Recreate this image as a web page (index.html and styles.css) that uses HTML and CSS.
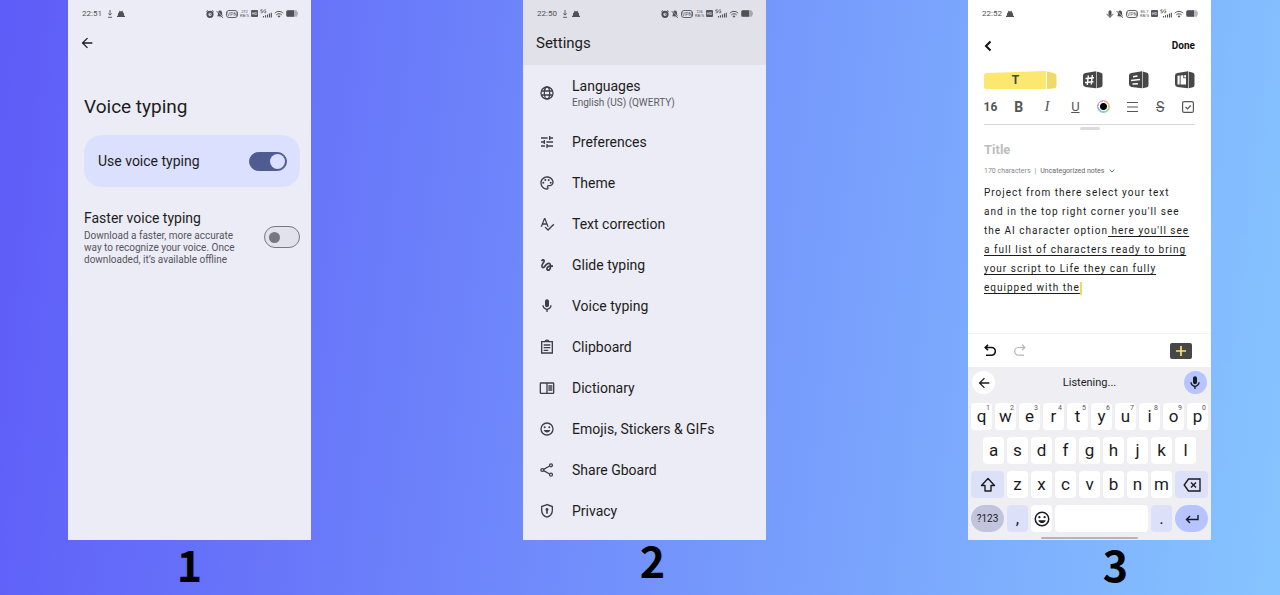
FILE: index.html
```
<!DOCTYPE html>
<html lang="en">
<head>
  <meta charset="UTF-8">
  <meta name="viewport" content="width=device-width, initial-scale=1.0">
  <title>Gboard voice typing steps</title>
  <link rel="stylesheet" href="styles.css">
</head>
<body>

  <!-- Icon set -->
  <svg class="sprite" aria-hidden="true">
    <symbol id="i-download" viewBox="0 0 8 8"><path d="M4 0v5M2.3 3.4 4 5.2l1.7-1.8M2 7.3h4" fill="none" stroke="currentColor" stroke-width=".9"/></symbol>
    <symbol id="i-bug" viewBox="0 0 8 8"><path d="M2.3.4 3 1.200h2l.7-.8.2 1.800 1.100 1.300v2.300H8v1.200H0V5.800h1V3.500l1.100-1.300z" fill="currentColor"/></symbol>
    <symbol id="i-alarm" viewBox="0 0 8 8"><path d="M.3 1.800 2 .4M7.700 1.800 6 .4" stroke="currentColor"/><circle cx="4" cy="4.300" r="2.600" fill="none" stroke="currentColor" stroke-width="2"/><path d="M4 3v1.500h1" fill="none" stroke="currentColor" stroke-width=".6"/></symbol>
    <symbol id="i-mute" viewBox="0 0 8 8"><path d="M4 .5c1.600.3 2.100 1.300 2.100 2.700V5l.9 1.200H1L1.900 5V3.200C1.900 1.800 2.400.800 4 .5zM3.200 6.700h1.600L4 7.600z" fill="currentColor"/><path d="M1 .6 7.300 7.500" stroke="#ececf6" stroke-width=".8"/><path d="M.6 1 6.900 7.900" stroke="currentColor" stroke-width=".9"/></symbol>
    <symbol id="i-signal" viewBox="0 0 12 9"><path d="M3.500 7v1.500M5.500 6.200v2.300M7.500 5.400v3.100M9.500 4.600v3.900M11.300 3.700v4.800" stroke="currentColor" stroke-width="1.100"/><path d="M2.600.8H.8v1.300h1.100c1.200 0 1.200 1.700 0 1.700H.6M6 1.200C4.800.2 3.700 1 3.700 2.300S5 4.300 6 3.400v-.9H5" fill="none" stroke="currentColor" stroke-width=".7"/></symbol>
    <symbol id="i-wifi" viewBox="0 0 10 8"><path d="M.8 3.200c2.400-2.400 6-2.400 8.400 0M2.300 4.900c1.600-1.500 3.800-1.500 5.400 0" fill="none" stroke="currentColor"/><path d="m5 7.700-1.500-1.700c.9-.8 2.100-.8 3 0z" fill="currentColor"/></symbol>
    <symbol id="i-battery" viewBox="0 0 12 8"><rect x=".3" y=".8" width="11" height="6.400" rx="1.500" fill="currentColor" opacity=".4"/><path d="M1.800.8H8v6.400H1.800A1.500 1.500 0 0 1 .3 5.700V2.300A1.500 1.500 0 0 1 1.800.8z" fill="currentColor"/><path d="M11.800 3v2" stroke="currentColor" stroke-width=".5"/></symbol>
    <symbol id="i-back" viewBox="0 0 24 24"><path d="M20 11H7.830l5.590-5.590L12 4l-8 8 8 8 1.410-1.410L7.830 13H20z" fill="currentColor"/></symbol>
    <symbol id="i-globe" viewBox="0 0 24 24"><g fill="none" stroke="currentColor" stroke-width="1.900"><circle cx="12" cy="12" r="9"/><ellipse cx="12" cy="12" rx="4" ry="9"/><path d="M3.800 9h16.400M3.800 15h16.400"/></g></symbol>
    <symbol id="i-tune" viewBox="0 0 24 24"><path d="M3 17v2h6v-2H3zM3 5v2h10V5H3zm10 16v-2h8v-2h-8v-2h-2v6h2zM7 9v2H3v2h4v2h2V9H7zm14 4v-2H11v2h10zm-6-4h2V7h4V5h-4V3h-2v6z" fill="currentColor"/></symbol>
    <symbol id="i-palette" viewBox="0 0 24 24"><g fill="currentColor"><path d="M12 22C6.490 22 2 17.510 2 12S6.490 2 12 2s10 4.040 10 9c0 3.310-2.690 6-6 6h-1.770c-.28 0-.5.22-.5.5 0 .12.05.23.13.33.41.47.64 1.060.64 1.670A2.500 2.500 0 0 1 12 22zm0-18c-4.410 0-8 3.590-8 8s3.590 8 8 8c.28 0 .5-.22.5-.5a.54.54 0 0 0-.14-.35c-.41-.46-.63-1.050-.63-1.650a2.500 2.500 0 0 1 2.500-2.500H16c2.210 0 4-1.790 4-4 0-3.860-3.590-7-8-7z"/><circle cx="6.500" cy="11.500" r="1.500"/><circle cx="9.500" cy="7.500" r="1.500"/><circle cx="14.500" cy="7.500" r="1.500"/><circle cx="17.500" cy="11.500" r="1.500"/></g></symbol>
    <symbol id="i-spell" viewBox="0 0 24 24"><path d="M12.450 16h2.090L9.430 3H7.570L2.460 16h2.090l1.120-3h5.640l1.140 3zm-6.020-5L8.500 5.480 10.570 11H6.430zm15.160.59l-8.090 8.090L9.830 16l-1.410 1.410 5.090 5.090L23 13l-1.410-1.410z" fill="currentColor"/></symbol>
    <symbol id="i-gesture" viewBox="0 0 24 24"><path d="M4.590 6.890c.7-.71 1.400-1.350 1.710-1.220.5.2 0 1.030-.3 1.520-.25.42-2.860 3.890-2.860 6.310 0 1.280.48 2.340 1.340 2.980.75.56 1.740.73 2.640.46 1.070-.31 1.950-1.400 3.060-2.770 1.210-1.490 2.830-3.440 4.080-3.440 1.630 0 1.650 1.010 1.760 1.790-3.780.64-5.380 3.670-5.380 5.370 0 1.700 1.440 3.090 3.210 3.090 1.630 0 4.290-1.330 4.690-6.100H21v-2.500h-2.470c-.15-1.650-1.090-4.200-4.030-4.200-2.250 0-4.180 1.910-4.940 2.840-.58.73-2.060 2.480-2.290 2.720-.25.3-.68.84-1.110.84-.45 0-.72-.83-.36-1.920.35-1.090 1.400-2.860 1.850-3.520.78-1.140 1.300-1.920 1.300-3.280C8.950 3.690 7.310 3 6.440 3 5.120 3 3.970 4 3.720 4.250c-.36.36-.66.66-.88.93l1.750 1.710zm9.290 11.660c-.31 0-.74-.26-.74-.72 0-.6.73-2.200 2.870-2.760-.3 2.690-1.430 3.480-2.130 3.480z" fill="currentColor"/></symbol>
    <symbol id="i-mic" viewBox="0 0 24 24"><path d="M12 14c1.660 0 3-1.340 3-3V5c0-1.660-1.340-3-3-3S9 3.340 9 5v6c0 1.660 1.340 3 3 3zM17 11c0 2.760-2.240 5-5 5s-5-2.240-5-5H5c0 3.530 2.610 6.430 6 6.920V21h2v-3.080c3.390-.49 6-3.390 6-6.920h-2z" fill="currentColor"/></symbol>
    <symbol id="i-mic-small" viewBox="0 0 8 8"><path d="M2.500 1.800a1.500 1.500 0 0 1 3 0v2.400a1.500 1.500 0 0 1-3 0z" fill="currentColor"/><path d="M1 3.800c.2 3.200 5.800 3.200 6 0M4 6v2" fill="none" stroke="currentColor"/></symbol>
    <symbol id="i-clipboard" viewBox="0 0 24 24"><g fill="none" stroke="currentColor" stroke-width="2"><path d="M9 4H4v17h16V4h-5M7 9h10M7 13h10M7 17h7"/><path d="M9 4c.5-3 5.500-3 6 0z"/></g></symbol>
    <symbol id="i-book" viewBox="0 0 24 24"><g fill="none" stroke="currentColor" stroke-width="2"><rect x="2" y="4.500" width="20" height="15.500" rx="1"/><path d="M12 4.500V20M14 9h6M14 12h6M14 15h6"/></g></symbol>
    <symbol id="i-smile" viewBox="0 0 24 24"><circle cx="12" cy="12" r="9" fill="none" stroke="currentColor" stroke-width="2"/><g fill="currentColor"><circle cx="8.500" cy="9.500" r="1.500"/><circle cx="15.500" cy="9.500" r="1.500"/><path d="M7 13.500h10c-1.600 5-8.400 5-10 0z"/></g></symbol>
    <symbol id="i-share" viewBox="0 0 24 24"><g fill="none" stroke="currentColor" stroke-width="1.900"><circle cx="18" cy="5" r="2.200"/><circle cx="5" cy="12" r="2.200"/><circle cx="18" cy="19" r="2.200"/><path d="m7 11 9-5M7 13l9 5"/></g></symbol>
    <symbol id="i-shield" viewBox="0 0 24 24"><path d="M12 2.300 4 5.300V11c0 5 3.300 8.900 8 10.300 4.700-1.400 8-5.300 8-10.300V5.300z" fill="none" stroke="currentColor" stroke-width="2"/><path d="M12 7.500a2.300 2.300 0 0 1 1.200 4.200V16h-2.400v-4.300A2.300 2.300 0 0 1 12 7.500z" fill="currentColor"/></symbol>
  </svg>

  <main class="steps">

    <!-- Step 1 -->
    <section class="step">
      <div class="phone">
        <div class="status">
          <span class="time">22:51</span>
          <svg class="s8"><use href="#i-download"/></svg>
          <svg class="s8"><use href="#i-bug"/></svg>
          <div class="status-right">
            <svg class="s8"><use href="#i-alarm"/></svg>
            <svg class="s8"><use href="#i-mute"/></svg>
            <span class="vpn">VPN</span>
            <span class="speed">272<br>KB/S</span>
            <span class="hd">HD</span>
            <svg class="s12"><use href="#i-signal"/></svg>
            <svg class="s10"><use href="#i-wifi"/></svg>
            <svg class="s12"><use href="#i-battery"/></svg>
          </div>
        </div>
        <button class="back" aria-label="Back"><svg><use href="#i-back"/></svg></button>
        <div class="voice">
          <h1>Voice typing</h1>
          <label class="card">
            <span>Use voice typing</span>
            <input type="checkbox" class="switch" checked>
          </label>
          <label class="option">
            <span class="option-text">
              <span>Faster voice typing</span>
              <small>Download a faster, more accurate way to recognize your voice. Once downloaded, it’s available offline</small>
            </span>
            <input type="checkbox" class="switch">
          </label>
        </div>
      </div>
      <p class="number">1</p>
    </section>

    <!-- Step 2 -->
    <section class="step step-two">
      <div class="phone">
        <header class="settings-head">
          <div class="status">
            <span class="time">22:50</span>
            <svg class="s8"><use href="#i-download"/></svg>
            <svg class="s8"><use href="#i-bug"/></svg>
            <div class="status-right">
              <svg class="s8"><use href="#i-alarm"/></svg>
              <svg class="s8"><use href="#i-mute"/></svg>
              <span class="vpn">VPN</span>
              <span class="speed">126<br>KB/S</span>
              <span class="hd">HD</span>
              <svg class="s12"><use href="#i-signal"/></svg>
              <svg class="s10"><use href="#i-wifi"/></svg>
              <svg class="s12"><use href="#i-battery"/></svg>
            </div>
          </div>
          <h2>Settings</h2>
        </header>
        <ul class="menu">
          <li class="tall"><svg><use href="#i-globe"/></svg><span>Languages<small>English (US) (QWERTY)</small></span></li>
          <li><svg><use href="#i-tune"/></svg><span>Preferences</span></li>
          <li><svg><use href="#i-palette"/></svg><span>Theme</span></li>
          <li><svg><use href="#i-spell"/></svg><span>Text correction</span></li>
          <li><svg><use href="#i-gesture"/></svg><span>Glide typing</span></li>
          <li><svg><use href="#i-mic"/></svg><span>Voice typing</span></li>
          <li><svg><use href="#i-clipboard"/></svg><span>Clipboard</span></li>
          <li><svg><use href="#i-book"/></svg><span>Dictionary</span></li>
          <li><svg><use href="#i-smile"/></svg><span>Emojis, Stickers &amp; GIFs</span></li>
          <li><svg><use href="#i-share"/></svg><span>Share Gboard</span></li>
          <li><svg><use href="#i-shield"/></svg><span>Privacy</span></li>
        </ul>
      </div>
      <p class="number">2</p>
    </section>

    <!-- Step 3 -->
    <section class="step step-three">
      <div class="phone note">
        <div class="status">
          <span class="time">22:52</span>
          <svg class="s8"><use href="#i-bug"/></svg>
          <div class="status-right">
            <svg class="s8"><use href="#i-mic-small"/></svg>
            <svg class="s8"><use href="#i-mute"/></svg>
            <span class="vpn">VPN</span>
            <span class="speed">85.7<br>KB/S</span>
            <span class="hd">HD</span>
            <svg class="s12"><use href="#i-signal"/></svg>
            <svg class="s10"><use href="#i-wifi"/></svg>
            <svg class="s12"><use href="#i-battery"/></svg>
          </div>
        </div>

        <div class="note-head">
          <button aria-label="Back"><svg width="8" height="12" viewBox="0 0 8 12"><path d="M6.500 1.500 2 6l4.500 4.500" fill="none" stroke="#111" stroke-width="2"/></svg></button>
          <button class="done">Done</button>
        </div>

        <div class="tabs">
          <button class="tab-text" aria-label="Text">
            <svg width="73" height="18" viewBox="0 0 73 18">
              <path d="M2.500 2 62 0v18H2.500Q0 18 0 15.500V4.500Q0 2 2.500 2z" fill="#fce771"/>
              <path d="m63 .2 7.500 2.100q2 .7 2 2.700v10q0 2-2 2.300L63 18z" fill="#f0d966"/>
            </svg>
            <span>T</span>
          </button>
          <button aria-label="Tag">
            <svg width="20" height="18" viewBox="0 0 20 18">
              <path d="M2.500 2 13 .3v17L2.500 16Q0 15.700 0 13V4.500Q0 2.300 2.500 2zM13.600.4 18 1.800q1.500.6 1.500 2.200v10q0 1.800-1.500 2.300l-4.400 1z" fill="#474747"/>
              <path d="M5.300 4.500 4.300 14M9.300 4l-1 9.500M2.500 7.500l8.500-.8M2 11.500l8.500-.8" stroke="#fff" stroke-width="1.400"/>
            </svg>
          </button>
          <button aria-label="Layout">
            <svg width="20" height="18" viewBox="0 0 20 18">
              <path d="M2.500 2 13 .3v17L2.500 16Q0 15.700 0 13V4.500Q0 2.300 2.500 2zM13.600.4 18 1.800q1.500.6 1.500 2.200v10q0 1.800-1.500 2.300l-4.400 1z" fill="#474747"/>
              <path d="M4 5.700 8.500 5M2 9.500l9-1M3.500 13l5.500-.3" stroke="#fff" stroke-width="1.400"/>
            </svg>
          </button>
          <button aria-label="Template">
            <svg width="20" height="18" viewBox="0 0 20 18">
              <path d="M2.500 2 13 .3v17L2.500 16Q0 15.700 0 13V4.500Q0 2.300 2.500 2zM13.600.4 18 1.800q1.500.6 1.500 2.200v10q0 1.800-1.500 2.300l-4.400 1z" fill="#474747"/>
              <path d="M2.500 4.800v8.700h2.200V4.600zM5.600 4.500v9H11V7.300H8.300v-3zM9.200 4.200v2.200H11V4z" fill="#fff"/>
            </svg>
          </button>
        </div>

        <div class="format">
          <button class="size">16</button>
          <button class="bold">B</button>
          <button class="italic">I</button>
          <button class="under">U</button>
          <button class="color" aria-label="Text color"></button>
          <button aria-label="Align"><svg width="12" height="12" viewBox="0 0 12 12"><path d="M1 1.500h11M1 6h11M1 10.500h11" stroke="#555" stroke-width="1.200"/></svg></button>
          <button class="strike">S</button>
          <button aria-label="Checklist"><svg width="12" height="12" viewBox="0 0 12 12"><rect x=".6" y=".6" width="10.800" height="10.800" rx="1.500" fill="none" stroke="#555" stroke-width="1.200"/><path d="m3.500 6 2 2 3.200-3.500" fill="none" stroke="#555" stroke-width="1.200"/></svg></button>
        </div>
        <div class="grip"></div>

        <div class="page">
          <input type="text" class="title" placeholder="Title" aria-label="Title">
          <div class="meta">
            <span>170 characters</span>
            <span>|</span>
            <select aria-label="Category"><option>Uncategorized notes</option></select>
            <svg width="6" height="4" viewBox="0 0 6 4"><path d="m.5.5 2.500 2.500L5.500.5" fill="none" stroke="#666" stroke-width=".9"/></svg>
          </div>
          <p class="body-text">Project from there select your text<br>and in the top right corner you'll see<br>the AI character option<u> here you'll see<br>a full list of characters ready to bring<br>your script to Life they can fully<br>equipped with the</u><span class="caret"></span></p>
        </div>

        <div class="undo-bar">
          <button aria-label="Undo"><svg width="12" height="13" viewBox="0 0 12 13"><path d="M4 .8 1.200 3.500 4 6.300M1.500 3.500h6a3.700 3.700 0 0 1 0 7.700H2" fill="none" stroke="#111" stroke-width="1.600"/></svg></button>
          <button aria-label="Redo"><svg width="12" height="13" viewBox="0 0 12 13"><path d="m8 .8 2.800 2.700L8 6.300M10.500 3.500h-6a3.700 3.700 0 0 0 0 7.700H10" fill="none" stroke="#b5b5b5" stroke-width="1.200"/></svg></button>
          <button class="add" aria-label="Add"><svg width="22" height="16" viewBox="0 0 22 16"><rect width="22" height="16" rx="2" fill="#474747"/><path d="M11 3v10M6 8h10" stroke="#fbe36a" stroke-width="1.700"/></svg></button>
        </div>

        <div class="keyboard">
          <div class="voice-bar">
            <button class="round" aria-label="Back"><svg><use href="#i-back"/></svg></button>
            <span>Listening...</span>
            <button class="round on" aria-label="Microphone"><svg><use href="#i-mic"/></svg></button>
          </div>
          <div class="keys">
            <button>q<sup>1</sup></button><button>w<sup>2</sup></button><button>e<sup>3</sup></button><button>r<sup>4</sup></button><button>t<sup>5</sup></button><button>y<sup>6</sup></button><button>u<sup>7</sup></button><button>i<sup>8</sup></button><button>o<sup>9</sup></button><button>p<sup>0</sup></button>
            <button class="indent">a</button><button>s</button><button>d</button><button>f</button><button>g</button><button>h</button><button>j</button><button>k</button><button>l</button>
            <button class="wide soft shift" aria-label="Shift"><svg width="16" height="16" viewBox="0 0 16 16"><path d="M8 1.500 1.500 8.500H5V14h6V8.500h3.500z" fill="none" stroke="currentColor" stroke-width="1.400" stroke-linejoin="round"/></svg></button><button>z</button><button>x</button><button>c</button><button>v</button><button>b</button><button>n</button><button>m</button><button class="wide soft" aria-label="Delete"><svg width="18" height="14" viewBox="0 0 18 14"><path d="M5.500 1H17v12H5.500L1.200 7zM8 4.500l5 5M13 4.500l-5 5" fill="none" stroke="currentColor" stroke-width="1.400"/></svg></button>
            <button class="wide pill sym">?123</button><button class="soft">,</button><button aria-label="Emoji"><svg width="18" height="18"><use href="#i-smile"/></svg></button><button class="space" aria-label="Space"></button><button class="soft">.</button><button class="wide pill enter" aria-label="Enter"><svg width="14" height="10" viewBox="0 0 14 10"><path d="M13 1v4.500H1.500M5 2 1.500 5.500 5 9" fill="none" stroke="currentColor" stroke-width="1.400"/></svg></button>
          </div>
          <div class="home"></div>
        </div>
      </div>
      <p class="number">3</p>
    </section>

  </main>
</body>
</html>
```
FILE: styles.css
```
* {
  box-sizing: border-box;
}

body {
  margin: 0;
  min-height: 100vh;
  background: linear-gradient(97deg, #5e5cf8, #86c4ff);
  font-family: Roboto, "Liberation Sans", sans-serif;
  color: #1c1c20;
}

h1, h2, p, ul {
  margin: 0;
  padding: 0;
}

button {
  padding: 0;
  border: 0;
  background: none;
  font: inherit;
  color: inherit;
  display: flex;
  align-items: center;
  justify-content: center;
}

svg {
  display: block;
  flex: none;
}

.sprite {
  position: absolute;
  width: 0;
  height: 0;
}

/* three phones on the gradient */
.steps {
  display: grid;
  grid-template-columns: 455fr 445fr 243px;
  padding: 0 69px 0 68px;
}

.step {
  width: 243px;
}

.phone {
  height: 540px;
  background: #ececf6;
  display: flex;
  flex-direction: column;
}

.number {
  font: bold 43px/46px "Noto Sans CJK SC", sans-serif;
  color: #000;
  text-align: center;
}

.step-two .number {
  padding-left: 16px;
  line-height: 38px;
}

.step-three .number {
  padding-left: 52px;
}

/* status bar */
.status {
  height: 27px;
  flex: none;
  padding: 0 13px 0 14px;
  display: flex;
  align-items: center;
  gap: 3px;
  font-size: 8px;
  color: #505056;
}

.time {
  margin-right: 1px;
}

.status-right {
  margin-left: auto;
  display: flex;
  align-items: center;
  gap: 2px;
}

.s8 { width: 8px; height: 8px; }
.s10 { width: 10px; height: 8px; }
.s12 { width: 12px; height: 9px; }

.vpn {
  border: 1px solid #606066;
  border-radius: 3px;
  font-size: 5px;
  line-height: 6px;
}

.speed {
  width: 9px;
  font-size: 4px;
  line-height: 4px;
  text-align: center;
}

.hd {
  width: 7px;
  border-radius: 1px;
  background: #55555b;
  color: #ececf6;
  font-size: 4px;
  line-height: 7px;
  text-align: center;
}

/* voice typing */
.back {
  width: 38px;
  height: 32px;
}

.back svg {
  width: 16px;
  height: 16px;
}

.voice {
  padding: 35px 11px 0 16px;
}

h1 {
  font-size: 19px;
  font-weight: 400;
  line-height: 26px;
}

.card {
  height: 52px;
  margin-top: 15px;
  padding: 0 13px 0 14px;
  border-radius: 18px;
  background: #dce0ff;
  display: flex;
  align-items: center;
  justify-content: space-between;
  font-size: 14px;
}

.option {
  margin-top: 21px;
  display: flex;
  align-items: center;
  justify-content: space-between;
  font-size: 14px;
  line-height: 20px;
}

.option-text {
  width: 160px;
}

.option small {
  display: block;
  margin-top: 2px;
  font-size: 10px;
  line-height: 12px;
  color: #55555c;
}

.switch {
  appearance: none;
  flex: none;
  width: 36px;
  height: 22px;
  margin: 0;
  padding: 4px;
  border: 1px solid #77777f;
  border-radius: 11px;
  background: #e2e2ec;
  display: flex;
  align-items: center;
}

.switch::before {
  content: "";
  width: 11px;
  height: 11px;
  border-radius: 50%;
  background: #77777f;
}

.switch:checked {
  width: 38px;
  height: 19px;
  padding: 1px;
  border-color: #4e5c92;
  background: #4e5c92;
  justify-content: flex-end;
}

.switch:checked::before {
  width: 15px;
  height: 15px;
  background: #dce0ff;
}

/* settings */
.settings-head {
  height: 65px;
  background: #e1e1ea;
}

h2 {
  padding-left: 13px;
  font-size: 15px;
  font-weight: 400;
  line-height: 32px;
}

.menu {
  list-style: none;
}

.menu li {
  height: 41px;
  padding-left: 16px;
  display: flex;
  align-items: center;
  gap: 17px;
  font-size: 14px;
  line-height: 18px;
}

.menu .tall {
  height: 56px;
}

.menu svg {
  width: 16px;
  height: 16px;
  color: #3e3e48;
}

.menu small {
  display: block;
  font-size: 10px;
  line-height: 15px;
  color: #5c5c64;
}

/* note editor */
.note {
  background: #fff;
}

.note-head {
  height: 37px;
  padding: 0 16px;
  display: flex;
  align-items: center;
  justify-content: space-between;
}

.done {
  font-size: 10px;
  font-weight: 700;
  color: #111;
}

.tabs {
  height: 31px;
  padding: 0 16px;
  display: flex;
  align-items: center;
  justify-content: space-between;
}

.tab-text {
  display: grid;
  place-items: center;
}

.tab-text svg,
.tab-text span {
  grid-area: 1 / 1;
}

.tab-text span {
  padding-right: 10px;
  font-size: 12px;
  font-weight: 700;
  color: #444;
}

.format {
  height: 30px;
  margin: 0 16px;
  padding-bottom: 6px;
  border-bottom: 1px solid #d8d8d8;
  display: flex;
  justify-content: space-between;
  font-size: 13px;
  color: #555;
}

.format button {
  width: 13px;
}

.size {
  font-size: 12px;
  font-weight: 700;
}

.format .bold {
  font-size: 14px;
  font-weight: 700;
}

.format .italic {
  font-family: "Liberation Serif", serif;
  font-style: italic;
  font-size: 15px;
}

.under {
  text-decoration: underline;
}

.format .strike {
  font-size: 14px;
  text-decoration: line-through;
}

.color {
  height: 13px;
  align-self: center;
  border-radius: 50%;
  background:
    radial-gradient(circle, #000 0 3px, #fff 4px 5px, transparent 5px),
    conic-gradient(#f39ab5, #f5c56f, #8bdcae, #7dc4f5, #b99af0, #f39ab5);
}

.grip {
  width: 20px;
  height: 3px;
  flex: none;
  margin: 2px auto 0;
  border-radius: 2px;
  background: #dcdcdc;
}

.page {
  flex: 1;
  padding: 10px 16px 0;
}

.title {
  width: 100%;
  height: 20px;
  padding: 0;
  border: 0;
  outline: 0;
  background: none;
  display: block;
  font: 700 13px/20px Roboto, sans-serif;
}

.title::placeholder {
  color: #bdbdbd;
}

.meta {
  height: 14px;
  margin-top: 4px;
  display: flex;
  align-items: center;
  gap: 4px;
  font-size: 7px;
  color: #8a8a8a;
}

.meta select {
  appearance: none;
  padding: 0;
  border: 0;
  background: none;
  font: inherit;
  color: #666;
}

.body-text {
  margin-top: 5px;
  font-size: 10px;
  line-height: 19px;
  letter-spacing: 1px;
  white-space: nowrap;
}

.body-text u {
  text-underline-offset: 2px;
}

.caret {
  display: inline-block;
  width: 2px;
  height: 13px;
  background: #f5d95a;
  vertical-align: middle;
}

.undo-bar {
  height: 34px;
  padding: 0 19px 0 16px;
  border-top: 1px solid #f3f3f3;
  display: flex;
  align-items: center;
  gap: 18px;
}

.add {
  margin-left: auto;
}

/* keyboard */
.keyboard {
  height: 173px;
  padding: 0 3px;
  background: #efeff3;
  color: #1b1b1f;
}

.voice-bar {
  height: 36px;
  padding: 0 1px 5px;
  display: flex;
  align-items: center;
  justify-content: space-between;
  font-size: 11px;
}

.round {
  width: 23px;
  height: 23px;
  border-radius: 50%;
  background: #fff;
}

.round svg {
  width: 16px;
  height: 16px;
}

.on {
  background: #b6c4ff;
}

.keys {
  display: grid;
  grid-template-columns: repeat(20, 1fr);
  grid-auto-rows: 27px;
  gap: 7px 3px;
}

.keys button {
  grid-column: span 2;
  min-width: 0;
  position: relative;
  border-radius: 4px;
  background: #fff;
  font-size: 17px;
  line-height: 27px;
}

.keys sup {
  position: absolute;
  top: 1px;
  right: 2px;
  font-size: 7px;
  line-height: 8px;
  color: #55555c;
}

.keys .wide {
  grid-column: span 3;
}

.keys .indent {
  grid-column: 2 / span 2;
}

.keys .shift {
  grid-column: 1 / span 3;
}

.keys .space {
  grid-column: span 8;
}

.keys .soft {
  background: #dde0f9;
}

.keys .pill {
  border-radius: 14px;
}

.keys .sym {
  background: #c1c4dc;
  font-size: 10px;
}

.keys .enter {
  background: #b6c4ff;
}

.home {
  width: 97px;
  height: 2px;
  margin: 5px auto 0;
  border-radius: 1px;
  background: #b4b4b8;
}
```
